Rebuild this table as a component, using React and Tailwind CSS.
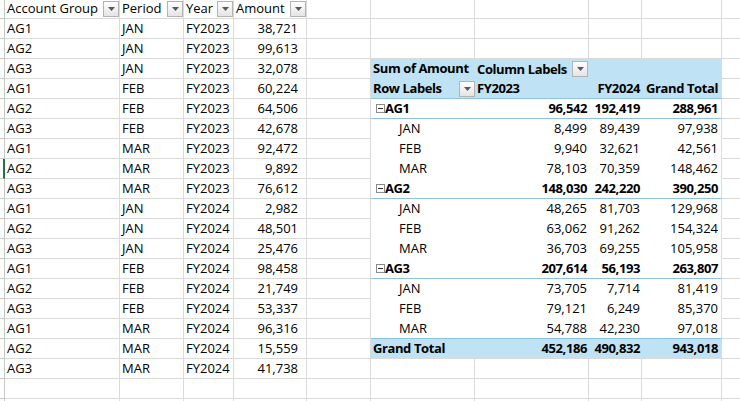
import React from "react";

const rows = [
  ["AG1", "JAN", "FY2023", "38,721"],
  ["AG2", "JAN", "FY2023", "99,613"],
  ["AG3", "JAN", "FY2023", "32,078"],
  ["AG1", "FEB", "FY2023", "60,224"],
  ["AG2", "FEB", "FY2023", "64,506"],
  ["AG3", "FEB", "FY2023", "42,678"],
  ["AG1", "MAR", "FY2023", "92,472"],
  ["AG2", "MAR", "FY2023", "9,892"],
  ["AG3", "MAR", "FY2023", "76,612"],
  ["AG1", "JAN", "FY2024", "2,982"],
  ["AG2", "JAN", "FY2024", "48,501"],
  ["AG3", "JAN", "FY2024", "25,476"],
  ["AG1", "FEB", "FY2024", "98,458"],
  ["AG2", "FEB", "FY2024", "21,749"],
  ["AG3", "FEB", "FY2024", "53,337"],
  ["AG1", "MAR", "FY2024", "96,316"],
  ["AG2", "MAR", "FY2024", "15,559"],
  ["AG3", "MAR", "FY2024", "41,738"],
  ["", "", "", ""],
  ["", "", "", ""],
];

// pivot lines keyed by row index
const pivot = {
  4: { type: "group", label: "AG1", v: ["96,542", "192,419", "288,961"] },
  5: { type: "item", label: "JAN", v: ["8,499", "89,439", "97,938"] },
  6: { type: "item", label: "FEB", v: ["9,940", "32,621", "42,561"] },
  7: { type: "item", label: "MAR", v: ["78,103", "70,359", "148,462"] },
  8: { type: "group", label: "AG2", v: ["148,030", "242,220", "390,250"] },
  9: { type: "item", label: "JAN", v: ["48,265", "81,703", "129,968"] },
  10: { type: "item", label: "FEB", v: ["63,062", "91,262", "154,324"] },
  11: { type: "item", label: "MAR", v: ["36,703", "69,255", "105,958"] },
  12: { type: "group", label: "AG3", v: ["207,614", "56,193", "263,807"] },
  13: { type: "item", label: "JAN", v: ["73,705", "7,714", "81,419"] },
  14: { type: "item", label: "FEB", v: ["79,121", "6,249", "85,370"] },
  15: { type: "item", label: "MAR", v: ["54,788", "42,230", "97,018"] },
  16: { type: "total", label: "Grand Total", v: ["452,186", "490,832", "943,018"] },
};

const FilterBtn = () => (
  <span className="flex h-[16px] w-[16px] shrink-0 items-center justify-center border border-[#b3b3b3] bg-linear-to-b from-white to-[#e4e4e4]">
    <svg width="7" height="4" viewBox="0 0 7 4">
      <path d="M0 0h7L3.5 4z" fill="#5a5a5a" />
    </svg>
  </span>
);

const Minus = () => (
  <svg width="9" height="9" viewBox="0 0 9 9" className="shrink-0">
    <rect x="0.5" y="0.5" width="8" height="8" fill="#fff" stroke="#8a8a8a" />
    <path d="M2 4.5h5" stroke="#333" />
  </svg>
);

const grid = "border-r border-b border-[#dadada]";
const strong = "font-bold tracking-[-0.4px]";

export default function App() {
  return (
    <div className="h-[401px] w-[740px] overflow-hidden whitespace-nowrap bg-white text-[13px] text-black [font-family:'Open_Sans',sans-serif]">
      {/* header row */}
      <div className="flex h-[19px]">
        <div className="h-full w-[5px] shrink-0 border-r border-b border-[#c8c8c8]" />
        <div className={`flex w-[115px] shrink-0 items-center justify-between pl-[2px] ${grid}`}>
          <span>Account Group</span>
          <FilterBtn />
        </div>
        <div className={`flex w-[64px] shrink-0 items-center justify-between pl-[2px] ${grid}`}>
          <span>Period</span>
          <FilterBtn />
        </div>
        <div className={`flex w-[50px] shrink-0 items-center justify-between pl-[2px] ${grid}`}>
          <span>Year</span>
          <FilterBtn />
        </div>
        <div className={`flex w-[73px] shrink-0 items-center justify-between pl-[2px] ${grid}`}>
          <span>Amount</span>
          <FilterBtn />
        </div>
        <div className={`w-[64px] shrink-0 ${grid}`} />
        <div className={`w-[104px] shrink-0 ${grid}`} />
        <div className={`w-[114px] shrink-0 ${grid}`} />
        <div className={`w-[53px] shrink-0 ${grid}`} />
        <div className={`w-[80px] shrink-0 ${grid}`} />
        <div className={`w-[64px] shrink-0 ${grid}`} />
      </div>

      {rows.map((r, i) => (
        <div key={i} className="flex h-[20px] leading-[19px]">
          <div
            className={`h-full w-[5px] shrink-0 border-b border-[#c8c8c8] ${
              i === 7 ? "border-r-2 border-r-[#217346]" : "border-r"
            }`}
          />
          <div className={`w-[115px] shrink-0 pl-[2px] ${grid}`}>{r[0]}</div>
          <div className={`w-[64px] shrink-0 pl-[2px] ${grid}`}>{r[1]}</div>
          <div className={`w-[50px] shrink-0 pl-[2px] ${grid}`}>{r[2]}</div>
          <div className={`w-[73px] shrink-0 pr-[8px] text-right ${grid}`}>{r[3]}</div>
          <div className={`w-[64px] shrink-0 ${grid}`} />
          <PivotCells i={i} />
          <div className={`w-[64px] shrink-0 ${grid}`} />
        </div>
      ))}
    </div>
  );
}

function PivotCells({ i }) {
  if (i === 2) {
    return (
      <>
        <div className={`w-[104px] shrink-0 bg-[#bfe3f4] pl-[2px] ${strong}`}>Sum of Amount</div>
        <div className={`flex w-[114px] shrink-0 items-center justify-between bg-[#bfe3f4] pl-[2px] pr-[1px] ${strong}`}>
          <span>Column Labels</span>
          <FilterBtn />
        </div>
        <div className="w-[53px] shrink-0 bg-[#bfe3f4]" />
        <div className="w-[80px] shrink-0 border-r border-[#dadada] bg-[#bfe3f4]" />
      </>
    );
  }
  if (i === 3) {
    const b = `border-b border-b-[#8cc3e0] bg-[#bfe3f4] ${strong}`;
    return (
      <>
        <div className={`flex w-[104px] shrink-0 items-center justify-between pl-[2px] ${b}`}>
          <span>Row Labels</span>
          <FilterBtn />
        </div>
        <div className={`w-[114px] shrink-0 pl-[2px] ${b}`}>FY2023</div>
        <div className={`w-[53px] shrink-0 pr-[2px] text-right ${b}`}>FY2024</div>
        <div className={`w-[80px] shrink-0 border-r border-r-[#dadada] pr-[3px] text-right ${b}`}>Grand Total</div>
      </>
    );
  }
  const p = pivot[i];
  if (!p) {
    return (
      <>
        <div className={`w-[104px] shrink-0 ${grid}`} />
        <div className={`w-[114px] shrink-0 ${grid}`} />
        <div className={`w-[53px] shrink-0 ${grid}`} />
        <div className={`w-[80px] shrink-0 ${grid}`} />
      </>
    );
  }
  const bg = p.type === "total" ? "bg-[#bfe3f4]" : "bg-white";
  const bold = p.type === "item" ? "" : strong;
  const bb =
    p.type === "total"
      ? "border-b border-b-[#dadada]"
      : p.type === "group" || i === 15
      ? "border-b border-b-[#8cc3e0]"
      : "border-b border-b-white";
  const pad = p.type === "item" ? "pl-[28px]" : p.type === "group" ? "pl-[5px]" : "pl-[2px]";
  return (
    <>
      <div className={`flex w-[104px] shrink-0 items-center ${bg} ${bold} ${bb} ${pad}`}>
        {p.type === "group" && <Minus />}
        <span>{p.label}</span>
      </div>
      <div className={`w-[114px] shrink-0 pr-[2px] text-right ${bg} ${bold} ${bb}`}>{p.v[0]}</div>
      <div className={`w-[53px] shrink-0 pr-[2px] text-right ${bg} ${bold} ${bb}`}>{p.v[1]}</div>
      <div className={`w-[80px] shrink-0 border-r border-r-[#dadada] pr-[3px] text-right ${bg} ${bold} ${bb}`}>{p.v[2]}</div>
    </>
  );
}
